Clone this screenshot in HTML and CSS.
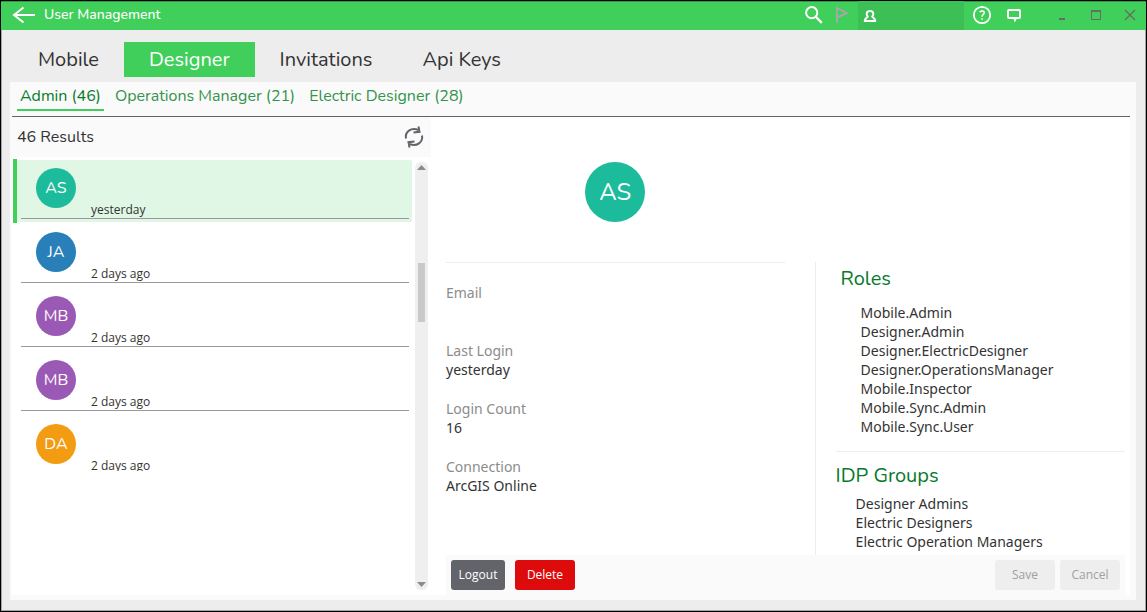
FILE: index.html
```html
<!DOCTYPE html>
<html lang="en">
<head>
<meta charset="utf-8">
<title>User Management</title>
<link rel="stylesheet" href="styles.css">
</head>
<body>
<div class="window">
  <header class="titlebar">
    <button class="icon-btn back" aria-label="Back">
      <svg width="24" height="18" viewBox="0 0 24 18"><path d="M23 9H2M11.500 1.500L2 9l9.500 7.500" fill="none" stroke="#fff" stroke-width="2"/></svg>
    </button>
    <h1 class="title">User Management</h1>
    <button class="icon-btn search" aria-label="Search">
      <svg width="18" height="18" viewBox="0 0 18 18"><circle cx="6.700" cy="6.700" r="5.600" fill="none" stroke="#fff" stroke-width="2"/><path d="M10.500 10.500L16.800 16.800" stroke="#fff" stroke-width="2.400"/></svg>
    </button>
    <button class="icon-btn flag" aria-label="Flag">
      <svg width="14" height="18" viewBox="0 0 14 18"><path d="M2 17V2l10 5L2 11.500" fill="none" stroke="#a3aaa4" stroke-width="2"/></svg>
    </button>
    <button class="account" aria-label="Account">
      <svg width="14" height="14" viewBox="0 0 14 14"><path d="M4.800 7.600C2.900 5.800 3.300 2 7 2s4.100 3.800 2.200 5.600c0 .9 3 1 3 4.400H1.800c0-3.400 3-3.500 3-4.400z" fill="none" stroke="#fff" stroke-width="2"/></svg>
    </button>
    <button class="icon-btn help" aria-label="Help">
      <svg width="20" height="20" viewBox="0 0 20 20"><circle cx="10" cy="10" r="8.200" fill="none" stroke="#fff" stroke-width="1.800"/><path d="M7.800 7.200c.6-1.700 4.600-1.700 4.400.7C12.100 9.600 10 9.700 10 11.800M10 13.200v1.600" fill="none" stroke="#fff" stroke-width="1.500"/></svg>
    </button>
    <button class="icon-btn chat" aria-label="Messages">
      <svg width="16" height="14" viewBox="0 0 16 14"><path d="M3 2h10q1 0 1 1v6q0 1-1 1h-3L9 12 8.500 10H3q-1 0-1-1V3q0-1 1-1z" fill="none" stroke="#fff" stroke-width="2"/></svg>
    </button>
    <div class="window-controls">
      <button class="icon-btn" aria-label="Minimize"><svg width="12" height="12" viewBox="0 0 12 12"><path d="M3 10h6" stroke="#666b68" stroke-width="2"/></svg></button>
      <button class="icon-btn" aria-label="Maximize"><svg width="12" height="12" viewBox="0 0 12 12"><path d="M1.500 1v9.500h9V1" fill="none" stroke="#666b68"/><path d="M1 2h10" stroke="#666b68" stroke-width="2"/></svg></button>
      <button class="icon-btn" aria-label="Close"><svg width="12" height="12" viewBox="0 0 12 12"><path d="M1 1l10 10M11 1L1 11" stroke="#666b68" stroke-width="1.300"/></svg></button>
    </div>
  </header>

  <nav class="tabs">
    <button class="tab">Mobile</button>
    <button class="tab active">Designer</button>
    <button class="tab">Invitations</button>
    <button class="tab">Api Keys</button>
  </nav>

  <main class="panel">
    <nav class="subtabs">
      <button class="subtab active">Admin (46)</button>
      <button class="subtab">Operations Manager (21)</button>
      <button class="subtab">Electric Designer (28)</button>
    </nav>
    <div class="content">
      <section class="sidebar">
        <div class="results">
          <h2 class="results-title">46 Results</h2>
          <button class="icon-btn" aria-label="Refresh">
            <svg width="22" height="24" viewBox="0 0 22 24"><path d="M3 13.500C1.800 7 8 1.800 15.500 5M19 10.500C20.200 17 14 22.200 6.500 19" fill="none" stroke="#63646a" stroke-width="2"/><path d="M15.500 1.500l1 5.300-6 .7M6.500 22.500l-1-5.300 6-.7" fill="none" stroke="#63646a" stroke-width="2"/></svg>
          </button>
        </div>
        <div class="list-area">
          <ul class="users">
            <li class="user selected"><div class="row"><span class="avatar teal">AS</span><span class="when">yesterday</span></div></li>
            <li class="user"><div class="row"><span class="avatar blue">JA</span><span class="when">2 days ago</span></div></li>
            <li class="user"><div class="row"><span class="avatar purple">MB</span><span class="when">2 days ago</span></div></li>
            <li class="user"><div class="row"><span class="avatar purple">MB</span><span class="when">2 days ago</span></div></li>
            <li class="user"><div class="row"><span class="avatar orange">DA</span><span class="when">2 days ago</span></div></li>
          </ul>
          <div class="scrollbar">
            <svg width="9" height="5" viewBox="0 0 9 5"><path d="M0 5L4.500 0 9 5z" fill="#8b8b8b"/></svg>
            <div class="track"><div class="thumb"></div></div>
            <svg width="9" height="5" viewBox="0 0 9 5"><path d="M0 0L4.500 5 9 0z" fill="#8b8b8b"/></svg>
          </div>
        </div>
      </section>

      <section class="detail">
        <div class="hero"><span class="avatar large teal">AS</span></div>
        <div class="columns">
          <dl class="fields">
            <div class="field"><dt>Email</dt><dd></dd></div>
            <div class="field"><dt>Last Login</dt><dd>yesterday</dd></div>
            <div class="field"><dt>Login Count</dt><dd>16</dd></div>
            <div class="field"><dt>Connection</dt><dd>ArcGIS Online</dd></div>
          </dl>
          <div class="access">
            <div class="roles">
              <h3 class="heading">Roles</h3>
              <ul class="names">
                <li>Mobile.Admin</li>
                <li>Designer.Admin</li>
                <li>Designer.ElectricDesigner</li>
                <li>Designer.OperationsManager</li>
                <li>Mobile.Inspector</li>
                <li>Mobile.Sync.Admin</li>
                <li>Mobile.Sync.User</li>
              </ul>
            </div>
            <div class="groups">
              <h3 class="heading">IDP Groups</h3>
              <ul class="names">
                <li>Designer Admins</li>
                <li>Electric Designers</li>
                <li>Electric Operation Managers</li>
              </ul>
            </div>
          </div>
        </div>
        <footer class="actions">
          <button class="btn logout">Logout</button>
          <button class="btn delete">Delete</button>
          <span class="spacer"></span>
          <button class="btn" disabled>Save</button>
          <button class="btn" disabled>Cancel</button>
        </footer>
      </section>
    </div>
  </main>
</div>
</body>
</html>
```

FILE: styles.css
```css
* { box-sizing: border-box; margin: 0; padding: 0; }

body {
  font: 14px/19px "Noto Sans", "Open Sans", sans-serif;
  color: #333;
  background: #000;
}

button { font: inherit; color: inherit; border: 0; background: none; }
ul { list-style: none; }
svg { display: block; }

.window {
  display: flex;
  flex-direction: column;
  min-height: 100vh;
  border: 1px solid #000;
  background: #ededed;
  box-shadow: inset 0 0 0 1px #a5a5a5;
}

.titlebar {
  display: flex;
  align-items: center;
  height: 29px;
  padding-left: 11px;
  background: #40cf5a;
  box-shadow: inset 0 1px #2f9a43;
}

.titlebar .icon-btn { padding-bottom: 2px; }

.title {
  flex: 1;
  padding: 0 0 2px 8px;
  color: #fff;
  font: 500 14px/20px Nunito, Lato, sans-serif;
}

.search { margin-right: 12px; }
.flag { margin-right: 9px; }
.account {
  align-self: stretch;
  width: 106px;
  padding-left: 5px;
  background: #3cbf55;
}
.help { margin: 0 14px 0 8px; }
.chat { margin-right: 34px; }
.window-controls { display: flex; gap: 22px; padding-right: 10px; }

.tabs { display: flex; padding: 12px 12px 5px; }
.tab {
  padding: 0 25px;
  font: 20px/35px Nunito, Lato, sans-serif;
}
.tab.active { background: #40cf5a; color: #fff; }

.panel {
  flex: 1;
  display: flex;
  flex-direction: column;
  margin: 0 10px 11px 9px;
  padding: 0 6px 5px 2px;
  background: #fafafa;
}

.subtabs {
  display: flex;
  gap: 8px;
  padding: 0 5px 5px;
  border-bottom: 1px solid #63646a;
}
.subtab {
  padding: 4px 3px 3px;
  color: #35934d;
  font: 16px/20px Nunito, Lato, sans-serif;
  border-bottom: 2px solid transparent;
}
.subtab.active { color: #077a2c; border-color: #40cf5a; }

.content {
  flex: 1;
  display: grid;
  grid-template-columns: 419px minmax(0, 1fr);
  background: #fff;
}

.sidebar { display: flex; flex-direction: column; }
.results {
  display: flex;
  align-items: center;
  justify-content: space-between;
  height: 40px;
  padding: 0 6px 0 5px;
  background: #fafafa;
}
.results-title { font: 16px/20px Nunito, Lato, sans-serif; }

.list-area {
  flex: 1;
  display: flex;
  justify-content: space-between;
  padding: 2px 3px 0 1px;
}
.users { width: 399px; max-height: 312px; overflow: hidden; }
.user {
  height: 64px;
  padding: 1px 0;
  border-left: 4px solid transparent;
}
.user.selected { border-color: #40cf5a; }
.row {
  display: grid;
  grid-template-columns: 40px 1fr;
  gap: 15px;
  height: 62px;
  padding: 8px 3px 4px 19px;
  background-image: linear-gradient(#99999d, #99999d);
  background-repeat: no-repeat;
  background-size: calc(100% - 7px) 1px;
  background-position: 4px 58px;
}
.selected .row { background-color: #e0f7e5; }
.when {
  align-self: end;
  font: 12px/16px "Open Sans", "Noto Sans", sans-serif;
}

.avatar {
  display: grid;
  place-items: center;
  width: 40px;
  height: 40px;
  border-radius: 50%;
  color: #fff;
  font: 16px/20px Nunito, Lato, sans-serif;
}
.avatar.large { width: 60px; height: 60px; font-size: 24px; line-height: 30px; }
.teal { background: #1cbb9b; }
.blue { background: #2980b9; }
.purple { background: #9b59b6; }
.orange { background: #f39c12; }

.scrollbar {
  display: flex;
  flex-direction: column;
  align-items: center;
  width: 13px;
  margin: 3px 0 5px;
  padding: 3px 0;
  border-radius: 6px;
  background: #efefef;
}
.track { flex: 1; padding-top: 93px; }
.thumb { width: 7px; height: 59px; background: #c9c9c9; }

.detail { display: flex; flex-direction: column; padding: 0 5px 0 15px; }
.hero, .columns {
  display: grid;
  grid-template-columns: minmax(0, 12fr) minmax(0, 11fr);
  column-gap: 30px;
}
.hero { padding: 45px 0 40px; justify-items: center; }
.columns { flex: 1; }

.fields {
  display: flex;
  flex-direction: column;
  gap: 20px;
  padding-top: 20px;
  border-top: 1px solid #ededed;
}
.field { min-height: 38px; }
.field dt { color: #8c8c8c; }

.access { padding-left: 20px; border-left: 1px solid #ededed; }
.roles { padding: 4px 5px 15px; border-bottom: 1px solid #ededed; }
.roles .heading { margin-bottom: 12px; }
.groups { padding: 11px 0 2px; }
.groups .heading { margin-bottom: 6px; }
.heading { color: #077a2c; font: 20px/25px Nunito, Lato, sans-serif; }
.names { padding-left: 20px; }

.actions {
  display: flex;
  gap: 5px;
  padding: 5px;
  background: #fafafa;
}
.spacer { flex: 1; }
.btn {
  min-width: 60px;
  height: 30px;
  padding: 0 7px;
  border-radius: 3px;
  background: #eee;
  font: 12px/16px "Open Sans", "Noto Sans", sans-serif;
}
.btn:disabled { color: #a0a0a0; }
.logout { min-width: 54px; margin-right: 5px; background: #63646a; color: #fff; }
.delete { background: #dd0b0b; color: #fff; }
```
